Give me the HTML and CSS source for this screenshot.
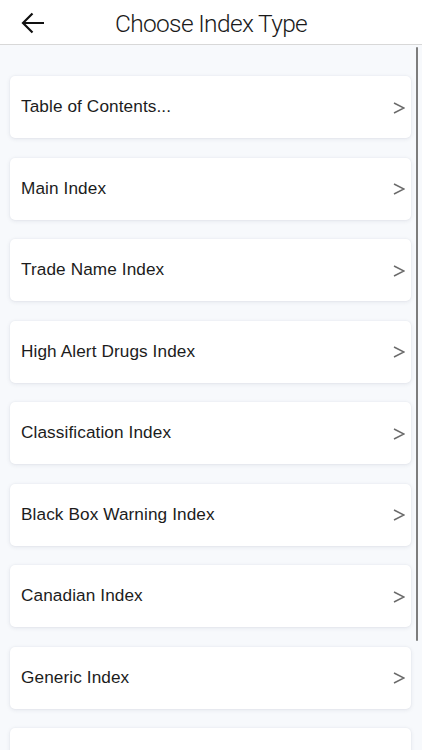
FILE: index.html
```html
<!DOCTYPE html>
<html>
<head>
<meta charset="utf-8">
<link rel="stylesheet" href="styles.css">
</head>
<body>
<div class="screen">
  <header class="header">
    <svg class="back" width="24" height="22" viewBox="0 0 24 22">
      <path d="M23 11H2M11.5 1.5L2 11l9.5 9.5" fill="none" stroke="#111" stroke-width="2.2" stroke-linecap="butt" stroke-linejoin="miter"/>
    </svg>
    <h1 class="title">Choose Index Type</h1>
  </header>
  <main class="list">
    <div class="card"><span class="label">Table of Contents...</span><svg class="chev" width="12" height="12" viewBox="0 0 12 12"><path d="M1 1l10 5-10 5" fill="none" stroke="#6b6b6b" stroke-width="1.5"/></svg></div>
    <div class="card"><span class="label">Main Index</span><svg class="chev" width="12" height="12" viewBox="0 0 12 12"><path d="M1 1l10 5-10 5" fill="none" stroke="#6b6b6b" stroke-width="1.5"/></svg></div>
    <div class="card"><span class="label">Trade Name Index</span><svg class="chev" width="12" height="12" viewBox="0 0 12 12"><path d="M1 1l10 5-10 5" fill="none" stroke="#6b6b6b" stroke-width="1.5"/></svg></div>
    <div class="card"><span class="label">High Alert Drugs Index</span><svg class="chev" width="12" height="12" viewBox="0 0 12 12"><path d="M1 1l10 5-10 5" fill="none" stroke="#6b6b6b" stroke-width="1.5"/></svg></div>
    <div class="card"><span class="label">Classification Index</span><svg class="chev" width="12" height="12" viewBox="0 0 12 12"><path d="M1 1l10 5-10 5" fill="none" stroke="#6b6b6b" stroke-width="1.5"/></svg></div>
    <div class="card"><span class="label">Black Box Warning Index</span><svg class="chev" width="12" height="12" viewBox="0 0 12 12"><path d="M1 1l10 5-10 5" fill="none" stroke="#6b6b6b" stroke-width="1.5"/></svg></div>
    <div class="card"><span class="label">Canadian Index</span><svg class="chev" width="12" height="12" viewBox="0 0 12 12"><path d="M1 1l10 5-10 5" fill="none" stroke="#6b6b6b" stroke-width="1.5"/></svg></div>
    <div class="card"><span class="label">Generic Index</span><svg class="chev" width="12" height="12" viewBox="0 0 12 12"><path d="M1 1l10 5-10 5" fill="none" stroke="#6b6b6b" stroke-width="1.5"/></svg></div>
    <div class="card"></div>
  </main>
  <div class="scrollbar"></div>
</div>
</body>
</html>
```
FILE: styles.css
```css
html, body {
  margin: 0;
  padding: 0;
  background: #f7f9fc;
}
.screen {
  position: relative;
  width: 422px;
  height: 750px;
  overflow: hidden;
  background: #f7f9fc;
  font-family: "Liberation Sans", Arial, sans-serif;
}
.header {
  height: 44px;
  background: #ffffff;
  border-bottom: 1px solid #d8d8d8;
  display: flex;
  align-items: center;
  position: relative;
}
.back {
  margin-left: 21px;
  margin-top: 1px;
}
.title {
  position: absolute;
  left: 0;
  right: 0;
  top: 0;
  margin: 0;
  line-height: 48px;
  text-align: center;
  font-family: Roboto, "Liberation Sans", sans-serif;
  font-weight: 300;
  font-size: 24.5px;
  color: #1a1a1a;
  letter-spacing: -0.65px;
}
.list {
  padding: 31px 11px 0 10px;
  display: flex;
  flex-direction: column;
  gap: 19.5px;
}
.card {
  flex: none;
  height: 62px;
  background: #ffffff;
  border-radius: 5px;
  box-shadow: 0 1px 4px rgba(40, 50, 80, 0.10), 0 0 2px rgba(40, 50, 80, 0.06);
  display: flex;
  align-items: center;
  justify-content: space-between;
  padding: 0 6px 0 11px;
}
.label {
  font-size: 17.2px;
  color: #1c1c1c;
  letter-spacing: 0.1px;
  margin-top: -1px;
}
.chev {
  display: block;
  margin-top: 1px;
}
.scrollbar {
  position: absolute;
  left: 416px;
  top: 47px;
  width: 2px;
  height: 594px;
  background: #7d7d7d;
  border-radius: 1px;
}
```
